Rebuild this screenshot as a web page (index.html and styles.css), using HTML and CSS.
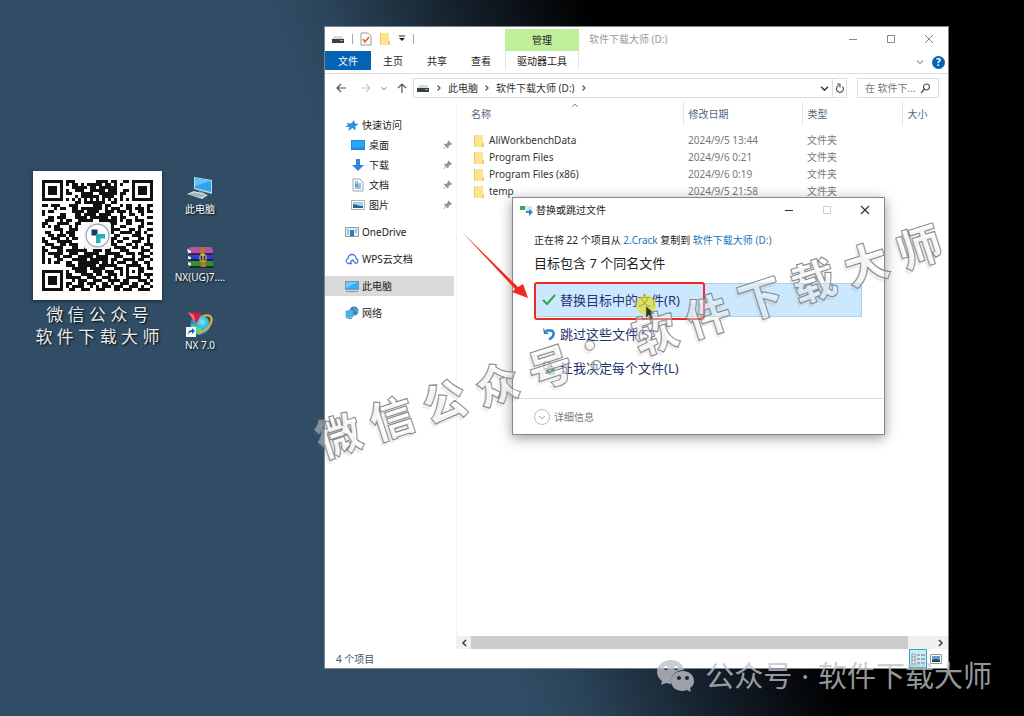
FILE: index.html
```html
<!DOCTYPE html>
<html lang="zh-CN">
<head>
  <meta charset="utf-8">
  <title>软件下载大师 (D:)</title>
  <link rel="stylesheet" href="styles.css">
</head>
<body>
  <!-- Shared icons -->
  <svg class="defs" width="0" height="0">
    <symbol id="folder" viewBox="0 0 12 14"><path d="M1 1h9v8l1 1v3H1z" fill="#ffe48d"/><path d="M1 1h1v12H1z" fill="#f2c85c"/><path d="M9 9h2v4H9z" fill="#f3cd64"/></symbol>
    <symbol id="pin" viewBox="0 0 10 10"><path d="M6 0l4 4-1 1-1-.3-2 2 .2 1.6-.9.7-2-2L1 9.5.5 9 3 6.500 1 4.500l.8-.8L3.500 4l2-2L5 1z" fill="#8b969f"/></symbol>
    <symbol id="drive" viewBox="0 0 14 10"><path d="M3 2h8l2 3H1z" fill="#d9dcde"/><path d="M1 5h12v4H1z" fill="#3b4044"/><path d="M9 6h3v1H9z" fill="#4ed35c"/></symbol>
    <symbol id="chev" viewBox="0 0 6 8"><path d="M1.500 1.500L4 4 1.500 6.500" fill="none" stroke="#555" stroke-width="1.200"/></symbol>
    <symbol id="down" viewBox="0 0 8 6"><path d="M1 1.500l3 3 3-3" fill="none" stroke="currentColor" stroke-width="1.300"/></symbol>
  </svg>

  <main class="desktop">
    <div class="left">
      <div class="card">
        <svg class="qr" id="qr" viewBox="0 0 43 43" role="img" aria-label="二维码">
          <rect width="43" height="43" fill="#fff"/>
        </svg>
        <p>微 信 公 众 号<br>软 件 下 载 大 师</p>
      </div>
      <div class="shortcuts">
        <a href="#">
          <svg width="30" height="26" viewBox="0 0 30 26"><path d="M9 1l18 3v14L9 13z" fill="#b9d8ea"/><path d="M10 2l16 3v11L10 12z" fill="#2fa2ea"/><path d="M10 2l16 3-16 5z" fill="#62c4fa"/><path d="M14 15l6 2-1 3-7-2z" fill="#8aa2b2"/><path d="M2 18l7-3 14 4-6 4z" fill="#d5dde2"/><path d="M5 18l12 3M8 17l12 3" stroke="#8796a1" fill="none"/></svg>
          此电脑
        </a>
        <a href="#">
          <svg width="30" height="24" viewBox="0 0 30 24"><path d="M2 3l4-2h20l2 3v5H5z" fill="#b252a2"/><path d="M3 9h25v6H5z" fill="#243fd0"/><path d="M3 15h25v6H6z" fill="#2f9230"/><path d="M2 3l4 2v3l-3-1zM3 10l3 1v3l-3-1zM3 16l3 1v3l-3-1z" fill="#f0e6d6"/><path d="M4 8h24M4 14h24M5 21h23" stroke="#181424" stroke-width="1.500"/><path d="M15 1h4l2 20h-5z" fill="#b87922"/><rect x="15" y="9" width="6" height="6" rx="1" fill="#383123" stroke="#e6c75a"/><path d="M18 8v6" stroke="#eee"/></svg>
          NX(UG)7....
        </a>
        <a href="#">
          <svg width="30" height="28" viewBox="0 0 30 28"><defs><radialGradient id="globe" cx=".6" cy=".35" r=".7"><stop offset="0" stop-color="#7fe3f4"/><stop offset=".5" stop-color="#27b0dc"/><stop offset="1" stop-color="#1669b4"/></radialGradient></defs><circle cx="15" cy="15" r="10" fill="url(#globe)"/><path d="M6 14a10 10 0 0 0 9 11l2-6z" fill="#72dc63" opacity=".8"/><path d="M18 6c12-4 12 10-3 17" fill="none" stroke="#f7ae24" stroke-width="2"/><path d="M3 2l14 1-6 11z" fill="#db1836"/><path d="M3 2l8 12-2-9z" fill="#fa6978"/><rect x="1" y="17" width="10" height="10" fill="#f7fafc"/><path d="M3 25q0-5 4-5v-2l3 3-3 3v-2q-3 0-4 3z" fill="#1762b4"/></svg>
          NX 7.0
        </a>
      </div>
    </div>

    <section class="window">
      <header class="titlebar">
        <div class="quick">
          <svg width="14" height="10"><use href="#drive"/></svg>
          <i class="sep"></i>
          <svg width="12" height="14" viewBox="0 0 12 14"><path d="M1 1h7l3 3v9H1z" fill="#fff" stroke="#999"/><path d="M3 7l2 3 4-5" fill="none" stroke="#e45a2b" stroke-width="1.500"/></svg>
          <svg width="12" height="14"><use href="#folder"/></svg>
          <svg width="8" height="8" viewBox="0 0 8 8"><path d="M1 1h6" stroke="#222"/><path d="M1 3h6L4 6z" fill="#222"/></svg>
          <i class="sep"></i>
        </div>
        <div class="manage">管理</div>
        <div class="caption">软件下载大师 (D:)</div>
        <div class="controls">
          <button aria-label="最小化"><svg width="10" height="10"><path d="M1 5.500h8" stroke="#888"/></svg></button>
          <button aria-label="最大化"><svg width="10" height="10"><path d="M1.500 1.500h7v7h-7z" fill="none" stroke="#888"/></svg></button>
          <button aria-label="关闭"><svg width="10" height="10"><path d="M1 1l8 8M9 1L1 9" stroke="#888"/></svg></button>
        </div>
      </header>

      <nav class="tabs">
        <button class="file">文件</button>
        <button>主页</button>
        <button>共享</button>
        <button>查看</button>
        <button class="tools">驱动器工具</button>
        <span class="help">
          <svg class="faint" width="8" height="6"><use href="#down"/></svg>
          <button class="question" aria-label="帮助">?</button>
        </span>
      </nav>

      <div class="address-row">
        <div class="arrows">
          <button aria-label="后退"><svg width="11" height="10" viewBox="0 0 11 10"><path d="M10 5H1.500M5 1L1 5l4 4" fill="none" stroke="#555" stroke-width="1.200"/></svg></button>
          <button aria-label="前进"><svg width="11" height="10" viewBox="0 0 11 10"><path d="M1 5h8.500M6 1l4 4-4 4" fill="none" stroke="#ccc" stroke-width="1.200"/></svg></button>
          <button class="small" aria-label="最近"><svg width="6" height="5"><use href="#down"/></svg></button>
          <button aria-label="向上"><svg width="10" height="11" viewBox="0 0 10 11"><path d="M5 10V1.500M1 5l4-4 4 4" fill="none" stroke="#555" stroke-width="1.200"/></svg></button>
        </div>
        <div class="address">
          <svg width="14" height="10"><use href="#drive"/></svg>
          <svg width="6" height="8"><use href="#chev"/></svg>
          <span>此电脑</span>
          <svg width="6" height="8"><use href="#chev"/></svg>
          <span>软件下载大师 (D:)</span>
          <svg width="6" height="8"><use href="#chev"/></svg>
          <svg class="drop" width="9" height="7"><use href="#down"/></svg>
          <button class="refresh" aria-label="刷新"><svg width="10" height="11" viewBox="0 0 10 11"><path d="M7.500 3.500A3.500 3.500 0 1 1 4 2.500M2 1h3v3.500" fill="none" stroke="#555" stroke-width="1.200"/></svg></button>
        </div>
        <label class="search">
          <input type="text" aria-label="搜索" value="在 软件下...">
          <svg width="11" height="11" viewBox="0 0 11 11"><circle cx="6.500" cy="4" r="3" fill="none" stroke="#555" stroke-width="1.200"/><path d="M4.500 6L1 10" stroke="#555" stroke-width="1.400"/></svg>
        </label>
      </div>

      <div class="body">
        <aside class="sidebar">
          <a href="#"><svg width="14" height="13" viewBox="0 0 14 13"><path d="M9 1l1 3.500 4 .5-3.500 2 0 4.500-3-2.500L3 12l1.500-4H0l3-2-1-2 4 .5z" fill="#2b92df"/></svg>快速访问</a>
          <a class="sub" href="#"><svg width="14" height="12" viewBox="0 0 14 12"><path d="M0 1h14v10H0z" fill="#1e88dc"/><path d="M1 2h12v6L1 9z" fill="#2da5f5"/></svg>桌面<svg class="pin" width="9" height="10"><use href="#pin"/></svg></a>
          <a class="sub" href="#"><svg width="14" height="14" viewBox="0 0 14 14"><path d="M5 1h4v6h4l-6 6-6-6h4z" fill="#3089dc"/></svg>下载<svg class="pin" width="9" height="10"><use href="#pin"/></svg></a>
          <a class="sub" href="#"><svg width="14" height="14" viewBox="0 0 14 14"><path d="M2 1h7l3 3v9H2z" fill="#f5fafc" stroke="#9aabb5"/><path d="M4 4h3M4 6h6M4 8h6M4 10h6" stroke="#478ab0"/><path d="M4 6h3v3H4z" fill="#58a9d2"/></svg>文档<svg class="pin" width="9" height="10"><use href="#pin"/></svg></a>
          <a class="sub" href="#"><svg width="14" height="12" viewBox="0 0 14 12"><path d="M.5 1.500h13v9H.5z" fill="#fff" stroke="#a8b1b8"/><path d="M2 3h10v6H2z" fill="#9bd3f5"/><path d="M2 5l4 1 3 1 3 0v2H2z" fill="#345f7e"/></svg>图片<svg class="pin" width="9" height="10"><use href="#pin"/></svg></a>
          <a class="root" href="#"><svg width="14" height="12" viewBox="0 0 14 12"><path d="M.5 1.500h13v9H.5z" fill="#e8edf0" stroke="#919ba2"/><path d="M5 4h4v6H5z" fill="#1680d7"/><path d="M2 4h2M2 6h2M2 8h2M10 4h2M10 6h2" stroke="#86939c"/></svg>OneDrive</a>
          <a class="root" href="#"><svg width="14" height="12" viewBox="0 0 14 12"><path d="M7 10.500H3.500A2.600 2.600 0 0 1 3 5.500a4 4 0 0 1 8 0 2.600 2.600 0 0 1 0 5L7.500 7 5 9.500" fill="none" stroke="#3f80e6" stroke-width="1.300"/></svg>WPS云文档</a>
          <a class="root active" href="#"><svg width="14" height="13" viewBox="0 0 14 13"><path d="M0 1h14v9H0z" fill="#6498b9"/><path d="M1 2h12v7H1z" fill="#36aef3"/><path d="M1 2h12L1 8z" fill="#76cbfa"/><path d="M1 11h12v1H1z" fill="#7b919d"/></svg>此电脑</a>
          <a class="root" href="#"><svg width="14" height="14" viewBox="0 0 14 14"><circle cx="9" cy="5" r="4.500" fill="#3e84b8"/><path d="M9 2l4 4" stroke="#8ac5e8"/><path d="M1 5l7-1v7l-7 1z" fill="#4ab2ec" stroke="#5e9cc4" stroke-width=".6"/><path d="M3 12h4v1H3z" fill="#77909f"/></svg>网络</a>
        </aside>

        <div class="content">
          <svg class="sort" width="8" height="5" viewBox="0 0 8 5"><path d="M1 4l3-3 3 3" fill="none" stroke="#888"/></svg>
          <table>
            <thead>
              <tr><th class="name">名称</th><th class="date">修改日期</th><th class="type">类型</th><th class="size">大小</th></tr>
            </thead>
            <tbody>
              <tr><td><svg width="12" height="14"><use href="#folder"/></svg>AliWorkbenchData</td><td>2024/9/5 13:44</td><td>文件夹</td><td></td></tr>
              <tr><td><svg width="12" height="14"><use href="#folder"/></svg>Program Files</td><td>2024/9/6 0:21</td><td>文件夹</td><td></td></tr>
              <tr><td><svg width="12" height="14"><use href="#folder"/></svg>Program Files (x86)</td><td>2024/9/6 0:19</td><td>文件夹</td><td></td></tr>
              <tr><td><svg width="12" height="14"><use href="#folder"/></svg>temp</td><td>2024/9/5 21:58</td><td>文件夹</td><td></td></tr>
            </tbody>
          </table>
          <div class="scrollbar">
            <button aria-label="向左滚动"><svg width="6" height="8" viewBox="0 0 6 8"><path d="M5 1L2 4l3 3" fill="none" stroke="#444" stroke-width="1.600"/></svg></button>
            <div class="thumb"></div>
            <button aria-label="向右滚动"><svg width="6" height="8" viewBox="0 0 6 8"><path d="M1 1l3 3-3 3" fill="none" stroke="#444" stroke-width="1.600"/></svg></button>
          </div>
        </div>
      </div>

      <footer class="status">
        <span>4 个项目</span>
        <div class="views">
          <button class="on" aria-label="详细信息"><svg width="16" height="14" viewBox="0 0 16 14"><path d="M2 2h3v10H2zM2 5h3M2 8h3" fill="#fff" stroke="#8b9498"/><path d="M7 3h3M11 3h4M7 7h3M11 7h4M7 11h3M11 11h4" stroke="#63757e"/></svg></button>
          <button aria-label="大图标"><svg width="12" height="10" viewBox="0 0 12 10"><path d="M.5.5h11v9H.5z" fill="#fff" stroke="#999"/><path d="M2 2h8v6H2z" fill="#5c9fdd"/><path d="M2 6l3-1 5 1v2H2z" fill="#27483f"/></svg></button>
        </div>
      </footer>

      <!-- Copy conflict dialog -->
      <div class="dialog" role="dialog" aria-label="替换或跳过文件">
        <div class="dialog-title">
          <svg width="14" height="12" viewBox="0 0 14 12"><path d="M1 2h5v4H1z" fill="#2fae4e"/><path d="M6 2h7v5H6z" fill="#dfe4e8"/><path d="M7 7h3V5l4 3-4 4V9H7z" fill="#2a86d6"/></svg>
          <span>替换或跳过文件</span>
          <button aria-label="最小化"><svg width="10" height="10"><path d="M1 5.500h8" stroke="#333"/></svg></button>
          <button aria-label="最大化" disabled><svg width="10" height="10"><path d="M1.500 1.500h7v7h-7z" fill="none" stroke="#ccc"/></svg></button>
          <button aria-label="关闭"><svg width="10" height="10"><path d="M1 1l8 8M9 1L1 9" stroke="#333" stroke-width="1.200"/></svg></button>
        </div>
        <div class="dialog-body">
          <p>正在将 22 个项目从 <a href="#">2.Crack</a> 复制到 <a href="#">软件下载大师 (D:)</a></p>
          <h2>目标包含 7 个同名文件</h2>
          <button class="option selected"><svg width="14" height="14" viewBox="0 0 14 14"><path d="M1 7l4 4 8-9" fill="none" stroke="#2ca64a" stroke-width="2"/></svg>替换目标中的文件(R)</button>
          <button class="option"><svg width="14" height="14" viewBox="0 0 14 14"><path d="M4 3.500h4c5 0 5 6-1 9" fill="none" stroke="#2c83cf" stroke-width="2.500"/><path d="M1 1l1 6h5z" fill="#2c83cf"/></svg>跳过这些文件(S)</button>
          <button class="option"><svg width="14" height="14" viewBox="0 0 14 14"><path d="M2 1h5l2 2v5H2zM6 5h4l2 2v6H6z" fill="#fff" stroke="#78858d"/><path d="M5 9l3 3 4-5" fill="none" stroke="#2ca64a" stroke-width="1.500"/></svg>让我决定每个文件(L)</button>
        </div>
        <button class="details"><svg width="16" height="16" viewBox="0 0 16 16"><circle cx="8" cy="8" r="7.500" fill="none" stroke="#bbb"/><path d="M5 7l3 3 3-3" fill="none" stroke="#aaa"/></svg>详细信息</button>
        <div class="highlight"></div>
        <svg class="cursor" width="24" height="28" viewBox="0 0 24 28"><circle cx="10" cy="10" r="10" fill="#e3e02a" opacity=".7"/><path d="M10 11v12l3-3 2 5 2-1-2-5h4z" fill="#333" stroke="#c8c860" stroke-width=".5"/></svg>
      </div>
      <svg class="arrow" width="70" height="72" viewBox="0 0 70 72"><path d="M1 1l56 55 5-3 5 14-16-6 3-3z" fill="#f4281c"/></svg>
    </section>
  </main>

  <div class="stamp">微 信 公 众 号 ： 软 件 下 载 大 师</div>
  <div class="channel">
    <svg width="40" height="34" viewBox="0 0 40 34"><path d="M15 1C7 1 1 6 1 13c0 4 2 7 5 9l-1 4 5-2 5 1c-1-9 5-14 13-14C27 5 22 1 15 1zM10 7a2 2 0 1 1 0 4 2 2 0 0 1 0-4zm10 0a2 2 0 1 1 0 4 2 2 0 0 1 0-4z" fill="currentColor" fill-rule="evenodd"/><path d="M27 12c-7 0-12 4-12 10s5 10 12 10l4-1 4 2-1-4c3-2 4-4 4-7 0-6-5-10-11-10zm-4 5a2 2 0 1 1 0 4 2 2 0 0 1 0-4zm8 0a2 2 0 1 1 0 4 2 2 0 0 1 0-4z" fill="currentColor" fill-rule="evenodd"/></svg>
    <span>公众号</span><span>·</span><span>软件下载大师</span>
  </div>
  <script src="qr.js"></script>
</body>
</html>
```
FILE: styles.css
```css
* {
  box-sizing: border-box;
}

body {
  margin: 0;
  min-height: 100vh;
  overflow: hidden;
  background: linear-gradient(70deg, #304d65 0%, #304d65 41%, #2a4359 46%, #1f3140 51%, #121c26 57%, #000 66%);
  color: #222;
  font-family: "Noto Sans", "Noto Sans CJK SC", sans-serif;
  font-size: 10px;
  line-height: 14px;
}

button,
input {
  font: inherit;
  color: inherit;
  padding: 0;
  border: 0;
  background: none;
}

button {
  display: flex;
  align-items: center;
  justify-content: center;
}

a {
  color: inherit;
  text-decoration: none;
}

p,
h2 {
  margin: 0;
  font-weight: normal;
}

svg {
  flex: none;
}

.defs {
  position: absolute;
}

.desktop {
  display: grid;
  grid-template-columns: 324px 1fr;
  min-height: 100vh;
  padding: 26px 75px 47px 0;
}

/* Left side of the desktop */
.left {
  display: flex;
  align-items: flex-start;
  gap: 8px;
  padding: 145px 0 0 33px;
}

.card {
  width: 129px;
}

.qr {
  display: block;
  width: 100%;
  box-shadow: 0 1px 4px rgba(0, 0, 0, 0.5);
}

.card p {
  margin: 4px -2px 0;
  color: #e8edf0;
  font-size: 17px;
  line-height: 22px;
  text-align: center;
  white-space: nowrap;
  text-shadow: 1px 1px 2px #000;
}

.shortcuts {
  display: flex;
  flex-direction: column;
  gap: 26px;
  width: 60px;
  padding-top: 3px;
}

.shortcuts a {
  display: flex;
  flex-direction: column;
  align-items: center;
  justify-content: flex-end;
  height: 42px;
  color: #fff;
  white-space: nowrap;
  text-shadow: 1px 1px 2px #000;
}

/* Explorer window */
.window {
  position: relative;
  display: flex;
  flex-direction: column;
  background: #fff;
  border: 1px solid #7b858b;
}

.titlebar {
  display: flex;
  height: 24px;
}

.quick {
  display: flex;
  align-items: center;
  gap: 7px;
  width: 180px;
  padding-left: 6px;
}

.sep {
  width: 1px;
  height: 10px;
  background: #aaa;
}

.manage {
  width: 74px;
  margin-top: 2px;
  background: #c0ef9b;
  text-align: center;
  line-height: 22px;
}

.caption {
  flex: 1;
  padding-left: 10px;
  color: #999;
  line-height: 24px;
}

.controls {
  display: flex;
}

.controls button {
  width: 38px;
}

.tabs {
  display: flex;
  height: 23px;
  padding-bottom: 3px;
  border-bottom: 1px solid #ddd;
}

.tabs button {
  width: 44px;
}

.tabs .file {
  width: 46px;
  background: #0563b3;
  color: #fff;
}

.tabs .tools {
  width: 74px;
  margin-left: 2px;
  border: solid #e4e4e4;
  border-width: 0 1px;
}

.help {
  display: flex;
  align-items: center;
  gap: 8px;
  margin-left: auto;
  padding: 3px 3px 0 0;
}

.faint {
  color: #aaa;
}

.tabs .question {
  width: 13px;
  height: 13px;
  border-radius: 50%;
  background: #0563b3;
  color: #fff;
  font-weight: bold;
}

.address-row {
  display: flex;
  align-items: center;
  height: 28px;
  padding-right: 9px;
}

.arrows {
  display: flex;
  align-items: center;
  width: 88px;
  padding-left: 4px;
}

.arrows button {
  width: 24px;
  height: 20px;
}

.arrows .small {
  width: 14px;
  color: #666;
}

.arrows button:last-child {
  width: 22px;
}

.address {
  display: flex;
  flex: 1;
  align-items: center;
  gap: 6px;
  height: 20px;
  margin-right: 10px;
  padding-left: 2px;
  border: 1px solid #ddd;
  color: #333;
}

.drop {
  margin-left: auto;
  margin-right: -3px;
}

.refresh {
  width: 14px;
  height: 18px;
  border-left: 1px solid #ddd;
}

.search {
  display: flex;
  align-items: center;
  width: 82px;
  height: 20px;
  padding: 0 7px;
  border: 1px solid #ddd;
  color: #777;
}

.search input {
  flex: 1;
  min-width: 0;
}

.body {
  display: flex;
  flex: 1;
}

.sidebar {
  width: 132px;
  padding: 13px 2px 0 0;
  border-right: 1px solid #f2f2f2;
}

.sidebar a {
  display: flex;
  align-items: center;
  gap: 3px;
  height: 20px;
  padding-left: 20px;
}

.sidebar .sub {
  gap: 4px;
  padding-left: 26px;
}

.sidebar .root {
  margin-top: 7px;
}

.sidebar .active {
  background: #d9d9d9;
}

.pin {
  margin-left: auto;
  margin-right: 2px;
}

.content {
  position: relative;
  display: flex;
  flex: 1;
  flex-direction: column;
  justify-content: space-between;
}

.sort {
  position: absolute;
  top: 1px;
  left: 114px;
}

table {
  width: 100%;
  border-collapse: collapse;
  table-layout: fixed;
}

th {
  height: 24px;
  padding: 0 0 0 5px;
  border-left: 1px solid #e5e5e5;
  color: #52677d;
  font-weight: normal;
  text-align: left;
}

th.name {
  padding-left: 14px;
  border-left: 0;
}

.date {
  width: 119px;
}

.type {
  width: 100px;
}

.size {
  width: 46px;
}

thead::after {
  content: "";
  display: block;
  height: 6px;
}

td {
  height: 17px;
  padding: 0 0 0 5px;
  color: #777;
  line-height: 17px;
}

td:first-child {
  display: flex;
  align-items: center;
  gap: 4px;
  padding-left: 16px;
  color: #333;
}

.scrollbar {
  display: flex;
  height: 13px;
  background: #f0f0f0;
}

.scrollbar button {
  width: 14px;
}

.thumb {
  flex: 1;
  margin-right: 26px;
  background: #cbcbcb;
}

.status {
  display: flex;
  align-items: center;
  justify-content: space-between;
  height: 19px;
  padding-left: 11px;
  color: #42566a;
}

.views {
  display: flex;
  padding-right: 3px;
}

.views button {
  width: 18px;
  height: 19px;
}

.views .on {
  border: 1px solid #35a5c5;
  background: #c9edf7;
}

/* Dialog over the window */
.dialog {
  position: absolute;
  top: 170px;
  left: 187px;
  width: 373px;
  background: #fff;
  border: 1px solid #888;
  box-shadow: 0 3px 12px rgba(0, 0, 0, 0.4);
}

.dialog-title {
  display: flex;
  align-items: center;
  height: 24px;
  padding-left: 6px;
}

.dialog-title span {
  flex: 1;
  padding-left: 3px;
}

.dialog-title button {
  width: 38px;
  height: 24px;
}

.dialog-body {
  padding: 10px 22px 13px 21px;
}

.dialog-body p {
  line-height: 16px;
}

.dialog-body a {
  color: #1b74bd;
}

.dialog-body h2 {
  margin: 5px 0 10px;
  font-size: 13px;
  line-height: 20px;
}

.option {
  justify-content: flex-start;
  gap: 4px;
  width: 100%;
  height: 34px;
  padding-left: 7px;
  border: 1px solid transparent;
  color: #26336e;
  font-size: 13px;
}

.option.selected {
  background: #cce8ff;
  border-color: #a6d4f2;
}

.details {
  justify-content: flex-start;
  gap: 4px;
  width: 100%;
  height: 36px;
  padding-left: 21px;
  border-top: 1px solid #ddd;
  color: #777;
}

.highlight {
  position: absolute;
  top: 84px;
  left: 21px;
  width: 171px;
  height: 38px;
  border: 2px solid #ee2a24;
  border-radius: 3px;
}

.cursor {
  position: absolute;
  top: 97px;
  left: 123px;
}

.arrow {
  position: absolute;
  top: 204px;
  left: 136px;
}

/* Text laid over everything */
.stamp {
  position: absolute;
  top: 308px;
  left: 302px;
  color: rgba(255, 255, 255, 0.4);
  font-size: 44px;
  font-weight: 900;
  line-height: 66px;
  white-space: nowrap;
  transform: rotate(-18deg);
  -webkit-text-stroke: 1px #888;
  text-shadow: -3px 3px 0 rgba(120, 120, 120, 0.15);
  pointer-events: none;
}

.channel {
  position: absolute;
  right: 32px;
  bottom: 20px;
  display: flex;
  align-items: center;
  gap: 9px;
  color: rgba(190, 194, 198, 0.8);
  font-size: 29px;
  line-height: 40px;
  pointer-events: none;
}
```
FILE: qr.js
```js
// one string per row, # is a dark module
const rows = [
  "........###.......####.##..##........",
  "........#.##.#.#####.##.#.#..........",
  "..........#####.##.######............",
  "........#..###..#####.###..##........",
  "........##...####..######.##.........",
  "...........#.######.####..#..........",
  "........#.#.#.#.#.#.#.#.#.#.#........",
  "...........##.#######..##............",
  "##.###...###.....###.##...#.##..#..##",
  "....#.##..##.#######.#.###..##.###.#.",
  "#.##......####.####..###.###.#..##.##",
  "#.....##...##.####.####...#..##..#...",
  "..##.###...####.######.##.##...#...##",
  ".###..#.##..#####..######.#.##.###...",
  "##...####..##.........###...##...#.##",
  "#.#.##...#.#..........##..##....##...",
  "....###..###..........####...##.#..##",
  ".##...#.###...........##..####.##.#..",
  "..##.###.##...........#.##....###..##",
  "#..###..#.##..........###..##...##.#.",
  "##...#####............##.##...###..#.",
  ".###..##.###.........####...##.#..###",
  "#..####...##..##.######.####..##.#..#",
  "##...##.#######..###.##...###....###.",
  "#.#####..###..#####..#####..###.##..#",
  "#...##.###..#####.####..###...#..###.",
  "#.#..##...#####.######.##..####.##..#",
  "#.#.##..##..#######.##.#.###..##..##.",
  "........###.######.######...#####..#.",
  "..........#####.#####...###.#...##.##",
  "........#..####..###.###..#.#.#.##...",
  "........##...####.##..###.#.#...#.###",
  "........#####..###..###.#...#####..#.",
  "..........#.###..###..####.##...###.#",
  "........##..##.###..##.#..###.##..##.",
  "........#.####..#.#.###.###..###.#..#",
  ".........##..###..###...##.###..####."
];

let path = "";
rows.forEach((row, y) => {
  for (let x = 0; x < row.length; x++) {
    if (row[x] === "#") path += `M${x + 3} ${y + 3}h1v1h-1z`;
  }
});

// corner finders
for (const [x, y] of [[3, 3], [33, 3], [3, 33]]) {
  path += `M${x} ${y}h7v7h-7zM${x + 1} ${y + 1}v5h5v-5zM${x + 2} ${y + 2}h3v3h-3z`;
}

document.getElementById("qr").innerHTML += `
  <path d="${path}" fill="#111"/>
  <rect x="17" y="17" width="9" height="9" rx="1" fill="#f4f6f7"/>
  <circle cx="21.500" cy="21.500" r="3.800" fill="#fff" stroke="#8ca4af" stroke-width=".4"/>
  <path d="M19.500 19.500h2v2h-2z" fill="#173c66"/>
  <path d="M21 21h3v1.500h-1.500V24H21z" fill="#23b4b8"/>`;
```
